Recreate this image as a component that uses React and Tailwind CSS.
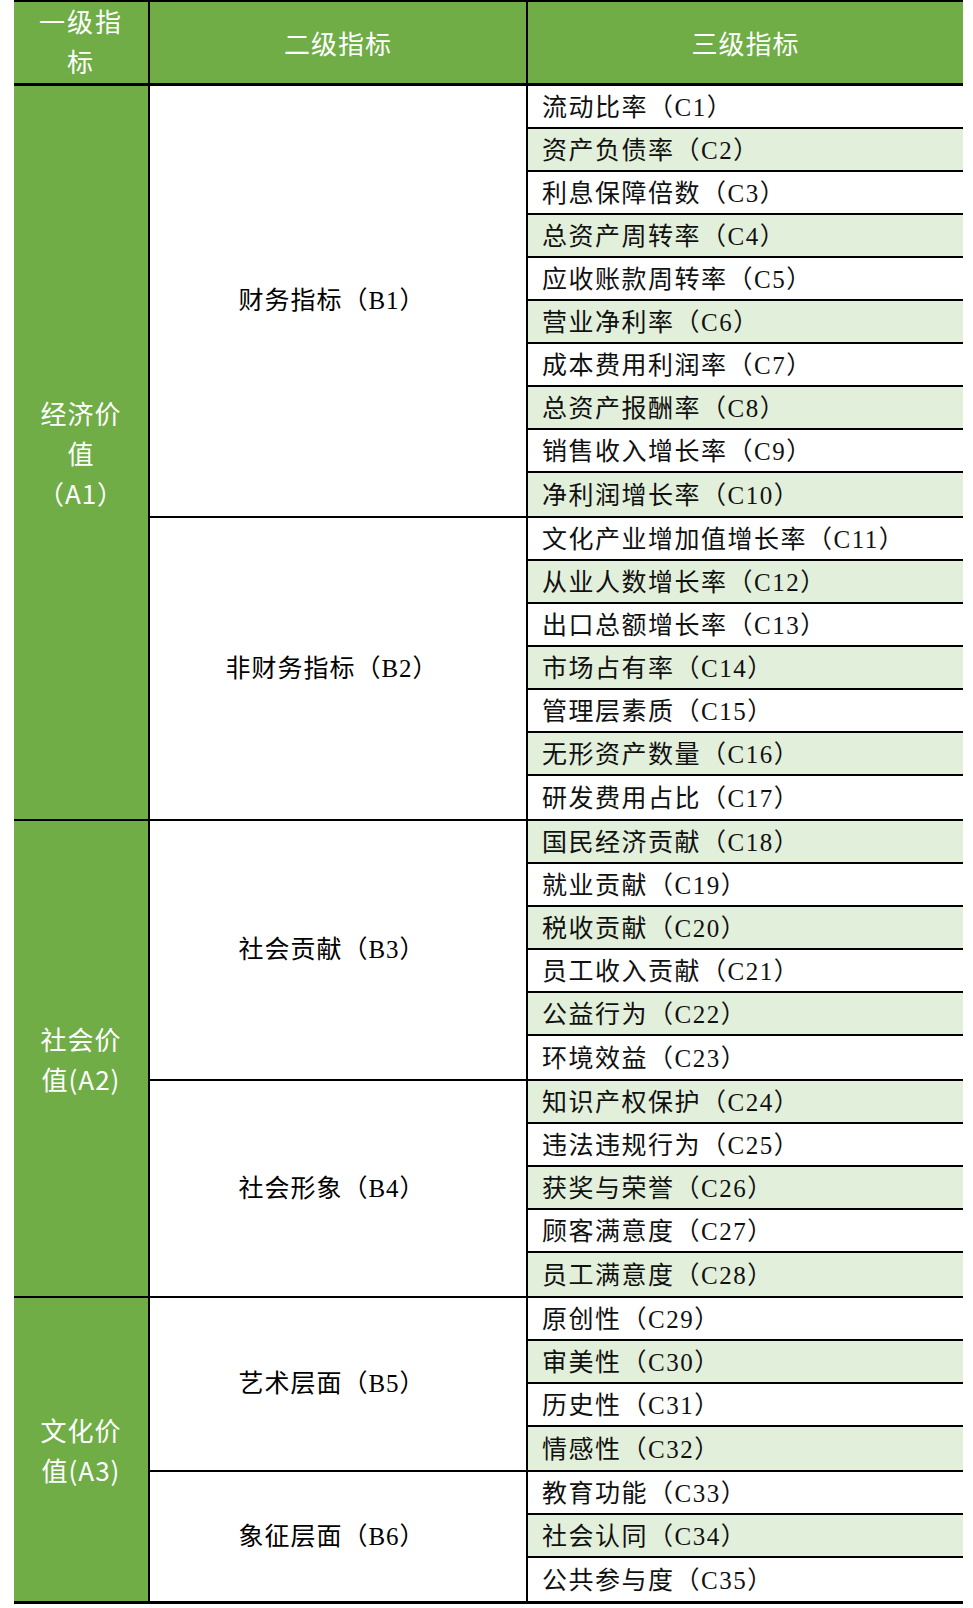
import React from 'react';

const groups = [
  {
    a: ['经济价', '值', '（A1）'],
    bs: [
      { name: '财务指标（B1）', cs: ['流动比率', '资产负债率', '利息保障倍数', '总资产周转率', '应收账款周转率', '营业净利率', '成本费用利润率', '总资产报酬率', '销售收入增长率', '净利润增长率'] },
      { name: '非财务指标（B2）', cs: ['文化产业增加值增长率', '从业人数增长率', '出口总额增长率', '市场占有率', '管理层素质', '无形资产数量', '研发费用占比'] },
    ],
  },
  {
    a: ['社会价', '值(A2)'],
    bs: [
      { name: '社会贡献（B3）', cs: ['国民经济贡献', '就业贡献', '税收贡献', '员工收入贡献', '公益行为', '环境效益'] },
      { name: '社会形象（B4）', cs: ['知识产权保护', '违法违规行为', '获奖与荣誉', '顾客满意度', '员工满意度'] },
    ],
  },
  {
    a: ['文化价', '值(A3)'],
    bs: [
      { name: '艺术层面（B5）', cs: ['原创性', '审美性', '历史性', '情感性'] },
      { name: '象征层面（B6）', cs: ['教育功能', '社会认同', '公共参与度'] },
    ],
  },
];

const sans = { fontFamily: '"Noto Sans CJK SC", "Noto Sans", sans-serif' };
const serif = { fontFamily: '"Liberation Serif", "Noto Sans CJK SC", serif' };

export default function App() {
  let n = 0;
  return (
    <div className="bg-white w-[973px] h-[1608px]">
      <div className="ml-[14px] w-[949px] border-t-2 border-b-[3px] border-black">
        {/* header */}
        <div className="flex h-[84px] border-b-[3px] border-black bg-[#70ad47] text-white text-[26px]" style={sans}>
          <div className="w-[136px] border-r-2 border-black flex flex-col items-center justify-center leading-[40px] tracking-[2px] pb-1">
            <span>一级指</span>
            <span>标</span>
          </div>
          <div className="w-[378px] border-r-2 border-black flex items-center justify-center tracking-[1px]">二级指标</div>
          <div className="flex-1 flex items-center justify-center tracking-[1px]">三级指标</div>
        </div>
        {/* body */}
        {groups.map((g, gi) => (
          <div key={gi} className={`flex ${gi < groups.length - 1 ? 'border-b-2 border-black' : ''}`}>
            <div className="w-[136px] shrink-0 bg-[#70ad47] border-r-2 border-black flex flex-col items-center justify-center text-white text-[26px] leading-[40px] tracking-[1px]" style={sans}>
              {g.a.map((t, i) => (
                <span key={i}>{t}</span>
              ))}
            </div>
            <div className="flex-1">
              {g.bs.map((b, bi) => (
                <div key={bi} className={`flex ${bi < g.bs.length - 1 ? 'border-b-2 border-black' : ''}`}>
                  <div className="w-[378px] shrink-0 border-r-2 border-black flex items-center justify-center text-[25px] tracking-[1px] text-black pr-3" style={serif}>
                    {b.name}
                  </div>
                  <div className="flex-1">
                    {b.cs.map((c, ci) => {
                      n += 1;
                      const last = ci === b.cs.length - 1;
                      return (
                        <div
                          key={ci}
                          className={`h-[43px] flex items-center pl-[14px] pt-[2px] text-[25px] tracking-[1.5px] text-[#111] ${n % 2 === 0 ? 'bg-[#e2efda]' : 'bg-white'} ${last ? 'h-[41px]' : 'border-b-2 border-black'}`}
                          style={serif}
                        >
                          {c}（C{n}）
                        </div>
                      );
                    })}
                  </div>
                </div>
              ))}
            </div>
          </div>
        ))}
      </div>
    </div>
  );
}
